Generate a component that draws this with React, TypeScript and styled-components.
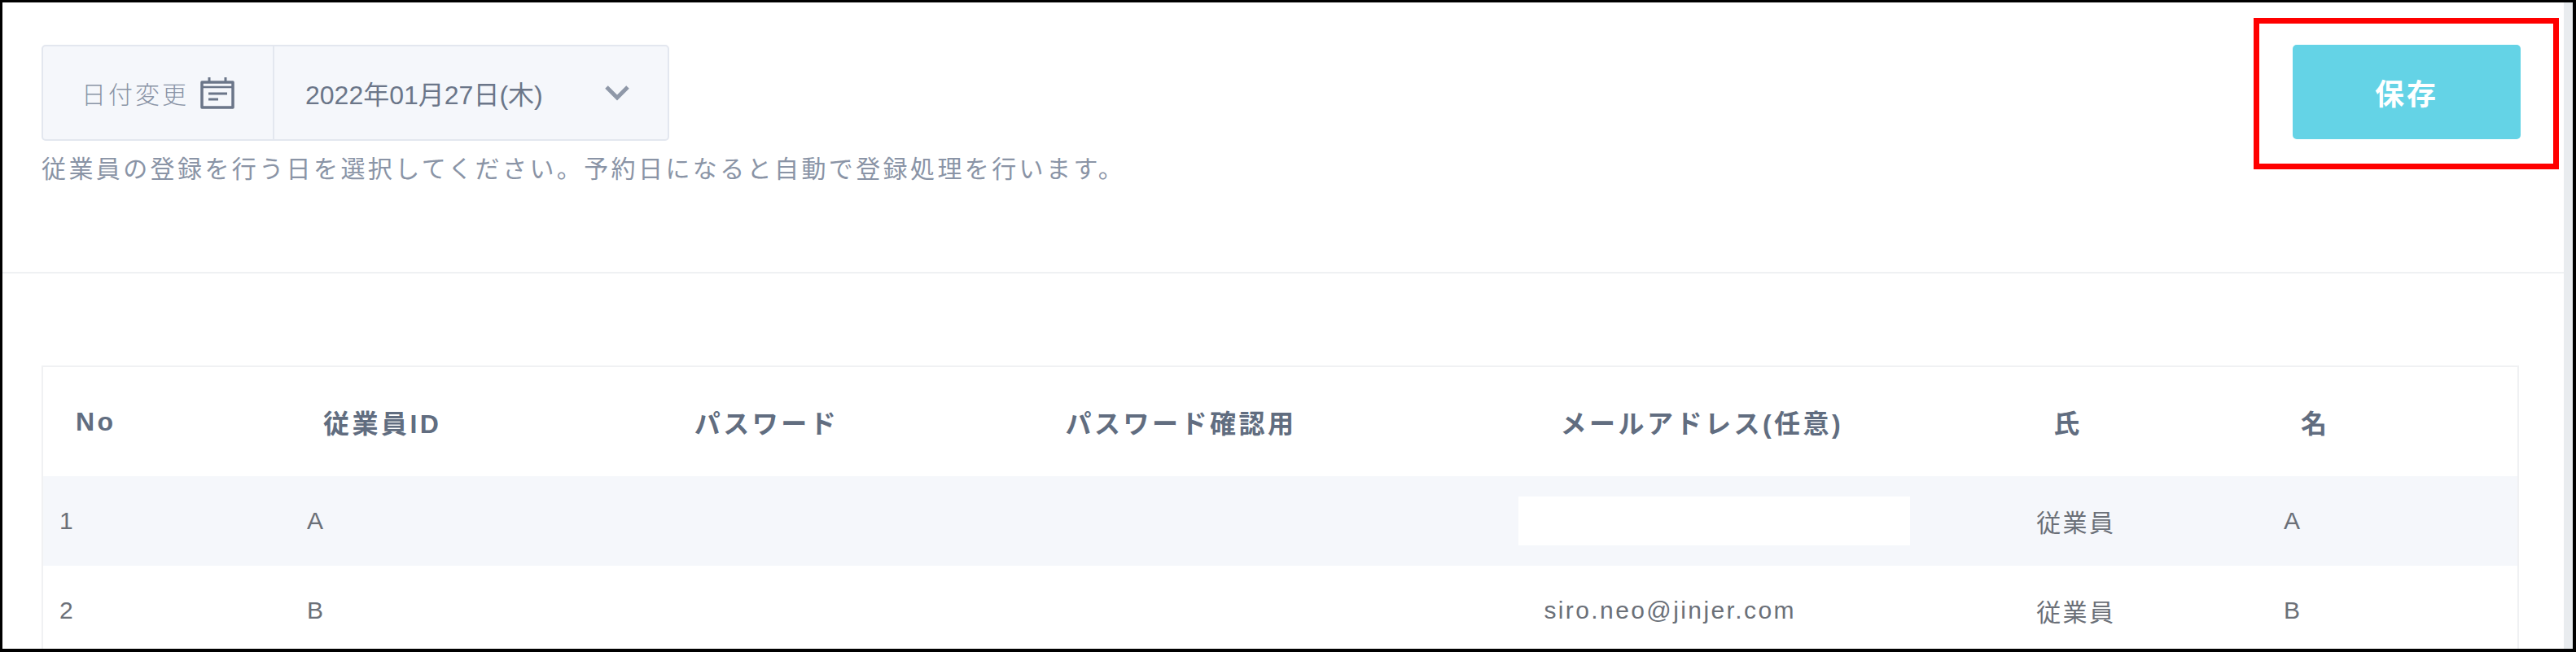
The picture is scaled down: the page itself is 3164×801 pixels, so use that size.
import React from "react";
import styled, { createGlobalStyle } from "styled-components";

const rows = [
  { no: "1", id: "A", email: "", last: "従業員", first: "A", shaded: true },
  { no: "2", id: "B", email: "siro.neo@jinjer.com", last: "従業員", first: "B", shaded: false },
];

export default function App() {
  return (
    <Frame>
      <GlobalStyle />
      <Main>
        <TopSection>
          <div>
            <DateField>
              <DateLabel>
                日付変更
                <CalendarIcon />
              </DateLabel>
              <DateSelect>
                <span>2022年01月27日(木)</span>
                <ChevronIcon />
              </DateSelect>
            </DateField>
            <Hint>従業員の登録を行う日を選択してください。予約日になると自動で登録処理を行います。</Hint>
          </div>
          <SaveButton>保存</SaveButton>
        </TopSection>
        <TableSection>
          <Table>
            <HeadRow>
              <HeadCell>No</HeadCell>
              <HeadCell>従業員ID</HeadCell>
              <HeadCell>パスワード</HeadCell>
              <HeadCell>パスワード確認用</HeadCell>
              <HeadCell>メールアドレス(任意)</HeadCell>
              <NameHeadCell>氏</NameHeadCell>
              <NameHeadCell>名</NameHeadCell>
            </HeadRow>
            {rows.map((row) => (
              <BodyRow key={row.no} $shaded={row.shaded}>
                <Cell>{row.no}</Cell>
                <Cell>{row.id}</Cell>
                <Cell />
                <Cell />
                <Cell>{row.email ? row.email : <EmailInput />}</Cell>
                <NameCell>{row.last}</NameCell>
                <NameCell>{row.first}</NameCell>
              </BodyRow>
            ))}
          </Table>
        </TableSection>
      </Main>
      <Scrollbar />
      <Annotation />
    </Frame>
  );
}

function CalendarIcon() {
  return (
    <IconSvg viewBox="0 0 42 40" width="42" height="40">
      <path d="M2 7h38v31H2z" fill="none" stroke="#6b7689" strokeWidth="3.5" strokeLinejoin="round" />
      <path d="M11 1v7M31 1v7" stroke="#6b7689" strokeWidth="3" />
      <path d="M2 13h38" stroke="#6b7689" strokeWidth="2.5" />
      <path d="M10 21h23M10 28h12" stroke="#6b7689" strokeWidth="3" />
    </IconSvg>
  );
}

function ChevronIcon() {
  return (
    <Chevron viewBox="0 0 32 20" width="32" height="20">
      <path d="M3 3l13 13L29 3" fill="none" stroke="#8f98a8" strokeWidth="5" />
    </Chevron>
  );
}

//Styles
const GlobalStyle = createGlobalStyle`
  html, body {
    margin: 0;
    padding: 0;
    background: #fff;
    overflow: hidden;
  }
  * {
    box-sizing: border-box;
  }
`;

const Frame = styled.div`
  position: relative;
  display: flex;
  width: 3164px;
  height: 801px;
  overflow: hidden;
  background: #fff;
  border-style: solid;
  border-color: #000;
  border-width: 3px 4px 4px 3px;
  font-family: "Liberation Sans", "Noto Sans CJK JP", sans-serif;
  color: #6b7689;
`;

const Main = styled.div`
  flex: 1;
  min-width: 0;
`;

const Scrollbar = styled.div`
  width: 11px;
  background: #e9ecef;
`;

const Annotation = styled.div`
  position: absolute;
  left: 2765px;
  top: 19px;
  width: 375px;
  height: 186px;
  border: 7px solid #ff0000;
`;

const TopSection = styled.div`
  display: flex;
  justify-content: space-between;
  align-items: flex-start;
  height: 333px;
  padding: 52px 53px 0 48px;
  border-bottom: 2px solid #eff1f3;
`;

const DateField = styled.div`
  display: flex;
  width: 771px;
  height: 118px;
  background: #f5f7fb;
  border: 2px solid #e3e7ef;
  border-radius: 5px;
`;

const DateLabel = styled.div`
  display: flex;
  align-items: center;
  justify-content: center;
  gap: 14px;
  width: 284px;
  padding-left: 0;
  border-right: 2px solid #e3e7ef;
  font-size: 30px;
  letter-spacing: 3px;
  color: #8a94a6;
  font-weight: 300;
`;

const IconSvg = styled.svg`
  flex: none;
`;

const DateSelect = styled.div`
  flex: 1;
  display: flex;
  align-items: center;
  justify-content: space-between;
  padding: 0 46px 0 38px;
  font-size: 32px;
  color: #6b7689;
`;

const Chevron = styled.svg`
  flex: none;
`;

const Hint = styled.p`
  margin: 14px 0 0;
  font-size: 30px;
  line-height: 42px;
  letter-spacing: 3.4px;
  color: #8a94a6;
`;

const SaveButton = styled.button`
  width: 280px;
  height: 116px;
  border: none;
  border-radius: 5px;
  margin-top: 0;
  background: #64d3e6;
  color: #fff;
  font-family: inherit;
  font-size: 36px;
  font-weight: 700;
  letter-spacing: 3px;
`;

const TableSection = styled.div`
  padding: 113px 55px 0 48px;
`;

const Table = styled.div`
  border: 2px solid #f0f1f3;
  border-bottom: none;
`;

const columns = "2fr 3fr 3fr 4fr 4fr 2fr 2fr";

const HeadRow = styled.div`
  display: grid;
  grid-template-columns: ${columns};
  align-items: center;
  height: 134px;
`;

const HeadCell = styled.div`
  padding-left: 40px;
  font-size: 32px;
  font-weight: 700;
  letter-spacing: 3.5px;
  color: #616d80;
`;

const NameHeadCell = styled(HeadCell)`
  padding-left: 38px;
`;

const BodyRow = styled.div<{ $shaded: boolean }>`
  display: grid;
  grid-template-columns: ${columns};
  align-items: center;
  height: 110px;
  background: ${(p) => (p.$shaded ? "#f5f7fb" : "#fff")};
`;

const Cell = styled.div`
  padding-left: 20px;
  font-size: 30px;
  letter-spacing: 2.4px;
  color: #6b7078;
`;

const NameCell = styled(Cell)`
  padding-left: 17px;
`;

const EmailInput = styled.div`
  width: 481px;
  height: 60px;
  margin-left: -31px;
  background: #fff;
`;
